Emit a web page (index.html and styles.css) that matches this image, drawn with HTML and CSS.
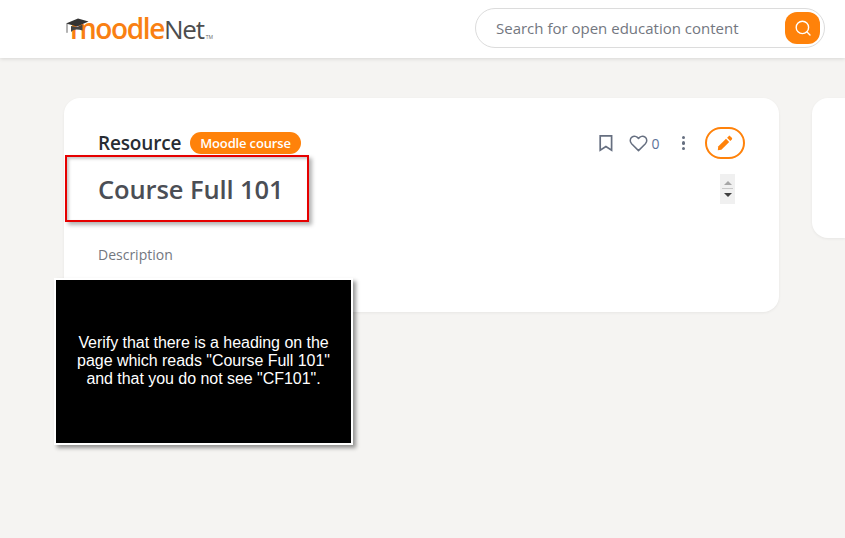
FILE: index.html
```html
<!DOCTYPE html>
<html lang="en">
<head>
<meta charset="utf-8">
<title>MoodleNet</title>
<link rel="stylesheet" href="styles.css">
</head>
<body>
<header class="topbar">
  <div class="logo">
    <svg class="logo-cap" width="24" height="19" viewBox="0 0 24 19"><path d="M1 6.500 13 1.500 23.500 4.500 12 9.500z" fill="#333"/><path d="M6 9v6c2-1.800 3.500-2.500 5.500-2.500 2 0 4 .3 6 1V7.500L12 10z" fill="#444"/><path d="M2 6.800v9" stroke="#666" stroke-width="1" fill="none"/></svg>
    <span class="logo-moodle">moodle</span><span class="logo-net">Net</span><span class="logo-tm">TM</span>
  </div>
  <div class="search">
    <span class="search-text">Search for open education content</span>
    <span class="search-btn">
      <svg width="18" height="18" viewBox="0 0 18 18" fill="none" stroke="#fff" stroke-width="1.400" stroke-linecap="round"><circle cx="8.400" cy="8.400" r="6.200"/><path d="M13 13l3 3"/></svg>
    </span>
  </div>
</header>
<main class="page">
  <section class="card">
    <div class="card-top">
      <div class="type">
        <span class="resource">Resource</span>
        <span class="badge">Moodle course</span>
      </div>
      <div class="actions">
        <svg class="bookmark" width="16" height="18" viewBox="0 0 16 18" fill="none" stroke="#666f80" stroke-width="1.700"><path d="M2.200 1.800h11.400v14.400L7.900 12.600 2.200 16.200z"/></svg>
        <span class="likes">
          <svg width="19" height="17" viewBox="0 0 19 17" fill="none" stroke="#666f80" stroke-width="1.500" stroke-linejoin="round"><path d="M9.500 15.600 2.600 8.800C.6 6.700.9 3.600 2.900 2.100 5 .6 7.900 1.200 9.500 3.500 11.100 1.200 14 .6 16.100 2.100c2 1.500 2.300 4.600.3 6.700z"/></svg>
          <span class="like-count">0</span>
        </span>
        <span class="dots"><i></i><i></i><i></i></span>
        <span class="edit">
          <svg width="16" height="16" viewBox="0 0 16 16" fill="#ff820a"><path d="M1.200 11.600 0.800 15.200 4.400 14.800 12.200 7 9 3.800z"/><path d="M10.100 2.700 13.300 5.900 14.800 4.400c.5-.5.5-1.200 0-1.700L13.300 1.200c-.5-.5-1.200-.5-1.700 0z"/></svg>
        </span>
      </div>
    </div>
    <div class="title-row">
      <h1 class="title">Course Full 101</h1>
      <span class="spinner"><b class="up"></b><u></u><b class="down"></b></span>
    </div>
    <p class="desc">Description</p>
  </section>
  <aside class="side"></aside>
</main>
<div class="highlight"></div>
<div class="note">Verify that there is a heading on the page which reads "Course Full 101" and that you do not see "CF101".</div>
</body>
</html>
```
FILE: styles.css
```css
* { box-sizing: border-box; }
html, body { margin: 0; height: 100%; }
body {
  position: relative;
  height: 538px;
  overflow: hidden;
  background: #f5f4f2;
  font-family: "Open Sans", sans-serif;
}
.topbar {
  height: 58px;
  background: #fff;
  box-shadow: 0 1px 4px rgba(0,0,0,.12);
  display: flex;
  align-items: center;
  justify-content: space-between;
  padding: 0 20px 2px 65px;
}
.logo {
  position: relative;
  display: flex;
  align-items: baseline;
  line-height: 1;
}
.logo-cap { position: absolute; left: 0; top: 3px; }
.logo-moodle {
  color: #f98012;
  font-weight: 600;
  font-size: 28px;
  letter-spacing: -1.400px;
  padding-left: 5px;
}
.logo-net {
  color: #4d4d4d;
  font-size: 26px;
  letter-spacing: -1.200px;
  font-weight: 400;
}
.logo-tm { color: #666; font-size: 5px; margin-left: 2px; }
.search {
  width: 350px;
  height: 40px;
  border: 1px solid #dcdcdc;
  border-radius: 20px;
  background: #fff;
  display: flex;
  align-items: center;
  justify-content: space-between;
  padding: 0 4px 0 20px;
}
.search-text { color: #73777f; font-size: 15px; letter-spacing: 0; }
.search-btn {
  width: 35px;
  height: 32px;
  border-radius: 12px;
  background: #ff820a;
  display: flex;
  align-items: center;
  justify-content: center;
}
.page {
  display: flex;
  align-items: flex-start;
  gap: 33px;
  padding: 40px 0 0 64px;
}
.card {
  flex: 0 0 715px;
  height: 214px;
  background: #fff;
  border-radius: 16px;
  box-shadow: 0 1px 3px rgba(0,0,0,.06);
  padding: 29px 34px 0 34px;
}
.card-top {
  display: flex;
  align-items: center;
  justify-content: space-between;
  height: 32px;
}
.type { display: flex; align-items: center; gap: 9px; }
.resource { color: #282c33; font-size: 19px; font-weight: 600; letter-spacing: -.17px; }
.badge {
  background: #ff820a;
  color: #fff;
  font-size: 13px;
  font-weight: 600;
  letter-spacing: -.15px;
  line-height: 22px;
  height: 22px;
  padding: 0 10px;
  border-radius: 11px;
}
.actions { display: flex; align-items: center; }
.bookmark { margin-right: 15px; }
.likes { display: flex; align-items: center; gap: 3px; margin-right: 22px; }
.like-count { color: #5d7299; font-size: 14px; }
.dots { display: flex; flex-direction: column; gap: 2px; margin-right: 20px; }
.dots i { display: block; width: 3.500px; height: 3.500px; border-radius: 50%; background: #666f80; }
.edit {
  width: 40px;
  height: 32px;
  border: 2px solid #ff820a;
  border-radius: 16px;
  display: flex;
  align-items: center;
  justify-content: center;
}
.title-row {
  display: flex;
  align-items: center;
  justify-content: space-between;
  height: 36px;
  margin-top: 12px;
  padding-right: 10px;
}
.title { margin: 0; color: #4b4e55; font-size: 25.500px; font-weight: 600; letter-spacing: -.1px; }
.spinner {
  width: 15px;
  height: 30px;
  background: #f0f0f0;
  display: flex;
  flex-direction: column;
  align-items: center;
  justify-content: center;
}
.spinner b { width: 0; height: 0; border-left: 4px solid transparent; border-right: 4px solid transparent; }
.spinner .up { border-bottom: 4px solid #a6a6a6; }
.spinner .down { border-top: 4px solid #3f3f3f; }
.spinner u { display: block; width: 11px; height: 1px; background: #c8c8c8; margin: 3px 0 4px; }
.desc { margin: 38px 0 0; color: #73777f; font-size: 14px; line-height: 20px; }
.side {
  flex: 1;
  height: 140px;
  background: #fff;
  border-radius: 16px 0 0 16px;
  box-shadow: 0 1px 3px rgba(0,0,0,.06);
}
.highlight {
  position: absolute;
  left: 65px;
  top: 155px;
  width: 244px;
  height: 67px;
  border: 2px solid #e60000;
  box-shadow: 3px 3px 4px rgba(0,0,0,.3), inset 2px 2px 3px rgba(0,0,0,.22);
}
.note {
  position: absolute;
  left: 54px;
  top: 278px;
  width: 299px;
  height: 167px;
  background: #000;
  border: 2px solid #fff;
  box-shadow: 3px 3px 4px rgba(0,0,0,.4);
  color: #fff;
  font-family: "Liberation Sans", Arial, sans-serif;
  font-size: 16px;
  letter-spacing: -.04px;
  line-height: 18px;
  text-align: center;
  display: flex;
  align-items: center;
  justify-content: center;
  padding: 0 19px 2px;
}
```
